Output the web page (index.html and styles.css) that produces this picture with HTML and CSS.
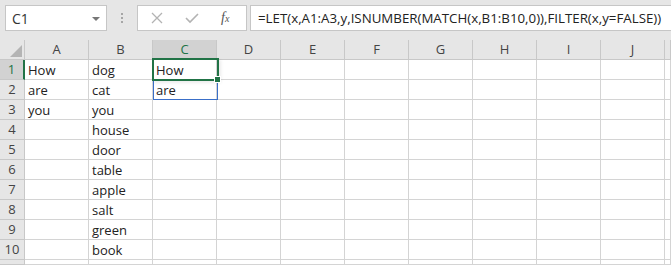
FILE: index.html
```
<!DOCTYPE html>
<html lang="en">
<head>
    <meta charset="UTF-8">
    <title>Sheet</title>
    <link rel="stylesheet" href="styles.css">
</head>
<body>
    <!--* name box and formula bar -->
    <div class="toolbar">
      <div class="nameBox">
        <span>C1</span>
        <span class="dropArrow"></span>
      </div>
      <div class="grip">
        <span></span><span></span><span></span>
      </div>
      <div class="fxButtons">
        <svg width="12" height="12" viewBox="0 0 12 12"><path d="M1 1 L11 11 M11 1 L1 11" stroke="#b3b3b3" stroke-width="1.3" fill="none"/></svg>
        <svg width="14" height="12" viewBox="0 0 14 12"><path d="M1 6 L5 10 L13 2" stroke="#b3b3b3" stroke-width="1.6" fill="none"/></svg>
        <span class="fx">f<sub>x</sub></span>
      </div>
      <div class="formulaInput">=LET(x,A1:A3,y,ISNUMBER(MATCH(x,B1:B10,0)),FILTER(x,y=FALSE))</div>
    </div>

    <!--* the grid -->
    <div class="sheetWrap">
      <div class="sheet" id="sheet">
        <div class="hd corner"><span class="cornerTri"></span></div>
        <div class="hd">A</div>
        <div class="hd">B</div>
        <div class="hd hdActive colActive">C</div>
        <div class="hd">D</div>
        <div class="hd">E</div>
        <div class="hd">F</div>
        <div class="hd">G</div>
        <div class="hd">H</div>
        <div class="hd">I</div>
        <div class="hd">J</div>
        <div class="hd"></div>
      </div>
      <div class="selSpill"></div>
      <div class="selCell"><span class="fillHandle"></span></div>
    </div>

    <script src="sheet.js"></script>
</body>
</html>
```

FILE: sheet.js
```
var colA = ["How", "are", "you"];
var colB = ["dog", "cat", "you", "house", "door", "table", "apple", "salt", "green", "book"];
var colC = ["How", "are"];

var sheet = document.getElementById("sheet");

function cell(text, cls) {
  var d = document.createElement("div");
  d.className = cls;
  d.textContent = text || "";
  sheet.appendChild(d);
}

for (var r = 0; r < 11; r++) {
  cell(r < 10 ? String(r + 1) : "", r === 0 ? "hd rowHd hdActive rowActive" : "hd rowHd");
  cell(colA[r], "c");
  cell(colB[r], "c");
  cell(colC[r], "c");
  for (var k = 0; k < 8; k++) {
    cell("", "c");
  }
}
```

FILE: styles.css
```
:root {
    --bar-bg: #e6e6e6;
    --grid-line: #d4d4d4;
    --head-line: #c6c6c6;
    --head-active: #d2d2d2;
    --excel-green: #217346;
    --spill-blue: #3a6fc8;
    --text-dark: #222;
}
body {
    margin: 0;
    width: 671px;
    height: 265px;
    overflow: hidden;
    background: #fff;
    font-family: "Open Sans", "Noto Sans", sans-serif;
    color: var(--text-dark);
}

.toolbar {
    height: 40px;
    background: var(--bar-bg);
    display: flex;
    align-items: flex-start;
    padding: 5px 0 0 5px;
    box-sizing: border-box;
}
.nameBox {
    width: 102px;
    height: 26px;
    box-sizing: border-box;
    background: #fff;
    border: 1px solid var(--head-line);
    display: flex;
    align-items: center;
    justify-content: space-between;
    padding: 0 6px 0 6px;
    font-size: 14px;
    color: #333;
}
.dropArrow {
    width: 0;
    height: 0;
    border-left: 4px solid transparent;
    border-right: 4px solid transparent;
    border-top: 4px solid #777;
    margin-top: 1px;
}
.grip {
    width: 30px;
    height: 26px;
    display: flex;
    flex-direction: column;
    align-items: center;
    justify-content: center;
    gap: 2px;
}
.grip span {
    width: 2px;
    height: 2px;
    background: #a6a6a6;
}
.fxButtons {
    width: 110px;
    height: 26px;
    box-sizing: border-box;
    background: #fff;
    border: 1px solid var(--head-line);
    display: flex;
    align-items: center;
    padding-left: 13px;
    gap: 22px;
}
.fx {
    font-family: "Liberation Serif", serif;
    font-style: italic;
    font-size: 14px;
    color: #555;
}
.fx sub {
    font-size: 10px;
    vertical-align: 0;
}
.formulaInput {
    flex: 1;
    min-width: 0;
    margin-left: 3px;
    height: 26px;
    box-sizing: border-box;
    background: #fff;
    border: 1px solid var(--head-line);
    border-right: none;
    padding-left: 7px;
    font-size: 13.3px;
    line-height: 24px;
    white-space: nowrap;
    overflow: hidden;
    color: #222;
}

.sheetWrap {
    position: relative;
    height: 225px;
    overflow: hidden;
}
.sheet {
    display: grid;
    grid-template-columns: 25px repeat(10, 64px) 6px;
    grid-template-rows: repeat(11, 20px) 5px;
}
.sheet div {
    box-sizing: border-box;
    border-right: 1px solid var(--grid-line);
    border-bottom: 1px solid var(--grid-line);
    font-size: 13px;
    line-height: 19px;
    white-space: nowrap;
    overflow: hidden;
}
.c {
    padding: 1px 0 0 3px;
    line-height: 18px;
}
.sheet .hd {
    background: var(--bar-bg);
    text-align: center;
    color: #444;
    border-right-color: #c8c8c8;
    border-bottom-color: #c8c8c8;
}
.sheet .corner {
    position: relative;
}
.cornerTri {
    position: absolute;
    right: 2px;
    bottom: 2px;
    width: 0;
    height: 0;
    border-left: 12px solid transparent;
    border-bottom: 12px solid #b4b4b4;
}
.sheet .hdActive {
    background: var(--head-active);
    color: var(--excel-green);
}
.sheet .rowActive {
    border-right: 2px solid var(--excel-green);
}
.sheet .colActive {
    border-bottom: 2px solid var(--excel-green);
}

.selSpill {
    position: absolute;
    left: 153px;
    top: 19px;
    width: 65px;
    height: 41px;
    box-sizing: border-box;
    border: 1px solid var(--spill-blue);
}
.selCell {
    position: absolute;
    left: 152px;
    top: 18px;
    width: 67px;
    height: 23px;
    box-sizing: border-box;
    border: 2px solid var(--excel-green);
    box-shadow: 2px 2px 3px rgba(0, 0, 0, 0.08);
}
.fillHandle {
    position: absolute;
    right: -4px;
    bottom: -4px;
    width: 5px;
    height: 5px;
    background: var(--excel-green);
    border: 1px solid #fff;
}
```
